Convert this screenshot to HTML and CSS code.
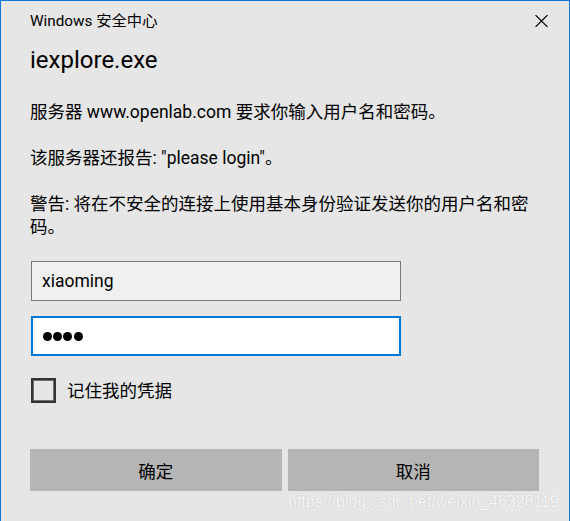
FILE: index.html
```html
<!DOCTYPE html>
<html lang="zh-CN">
<head>
<meta charset="utf-8">
<title>Windows 安全中心</title>
<link rel="stylesheet" href="styles.css">
</head>
<body>
<div class="dialog">
  <div class="titlebar">
    <span class="title">Windows 安全中心</span>
    <span class="close" aria-label="关闭">
      <svg width="13" height="12" viewBox="0 0 13 12"><path d="M0.5 0 L12.5 12 M12.5 0 L0.5 12" stroke="#000" stroke-width="1.1" fill="none"/></svg>
    </span>
  </div>
  <div class="content">
    <h1 class="app">iexplore.exe</h1>
    <p class="msg first">服务器 www.openlab.com 要求你输入用户名和密码。</p>
    <p class="msg">该服务器还报告: "please login"。</p>
    <p class="msg">警告: 将在不安全的连接上使用基本身份验证发送你的用户名和密码。</p>
    <div class="field user">xiaoming</div>
    <div class="field pass"><span class="dot"></span><span class="dot"></span><span class="dot"></span><span class="dot"></span></div>
    <div class="remember"><span class="box"></span><span class="label">记住我的凭据</span></div>
  </div>
  <div class="buttons">
    <div class="btn">确定</div>
    <div class="btn">取消</div>
  </div>
  <div class="watermark">https://blog.csdn.net/weixin_46328119</div>
</div>
</body>
</html>
```

FILE: styles.css
```css
html, body {
  margin: 0;
  padding: 0;
  background: #e6e6e6;
}
.dialog {
  position: relative;
  box-sizing: border-box;
  width: 570px;
  height: 521px;
  background: #e6e6e6;
  border: 1px solid #0a78d6;
  border-bottom: none;
  font-family: Roboto, "Noto Sans CJK SC", sans-serif;
  color: #000;
  display: flex;
  flex-direction: column;
}
.titlebar {
  display: flex;
  align-items: center;
  justify-content: space-between;
  padding: 10px 21px 0 29px;
  height: 20px;
}
.title {
  font-size: 15.3px;
  line-height: 20px;
}
.close {
  display: flex;
  width: 13px;
  height: 12px;
}
.content {
  padding: 0 29px;
  display: flex;
  flex-direction: column;
}
.app {
  margin: 13px 0 0 0;
  font-size: 24px;
  line-height: 32px;
  font-weight: normal;
}
.msg {
  margin: 23px 0 0 0;
  font-size: 17.5px;
  line-height: 23px;
  width: 505px;
}
.msg.first {
  margin-top: 25px;
}
.field {
  box-sizing: border-box;
  width: 370px;
  height: 40px;
  margin-left: 1px;
  display: flex;
  align-items: center;
  font-size: 17.5px;
}
.user {
  margin-top: 22px;
  background: #f0f0f0;
  border: 1px solid #7a7a7a;
  padding-left: 10px;
}
.pass {
  margin-top: 15px;
  background: #fff;
  border: 2px solid #0078d7;
  padding-left: 10px;
  gap: 1.2px;
}
.dot {
  width: 9px;
  height: 9px;
  border-radius: 50%;
  background: #000;
}
.remember {
  margin-top: 22px;
  margin-left: 1px;
  display: flex;
  align-items: center;
  gap: 11px;
}
.box {
  box-sizing: border-box;
  width: 25px;
  height: 25px;
  border: 2px solid #333;
  box-shadow: inset 0 0 0 1px #6e6e6e;
  background: #e6e6e6;
}
.label {
  font-size: 17.5px;
  line-height: 24px;
}
.buttons {
  margin-top: auto;
  margin-bottom: 30px;
  padding: 0 30px 0 29px;
  display: grid;
  grid-template-columns: 1fr 1fr;
  gap: 6px;
}
.btn {
  height: 42px;
  background: #b5b5b5;
  display: flex;
  align-items: center;
  justify-content: center;
  font-size: 17.5px;
}
.watermark {
  position: absolute;
  right: 10px;
  bottom: 10px;
  font-family: "Liberation Sans", Arial, sans-serif;
  font-size: 16px;
  line-height: 18px;
  color: rgba(255, 255, 255, 0.92);
  text-shadow: 0 0 1px rgba(110, 110, 110, 0.45);
}
```
